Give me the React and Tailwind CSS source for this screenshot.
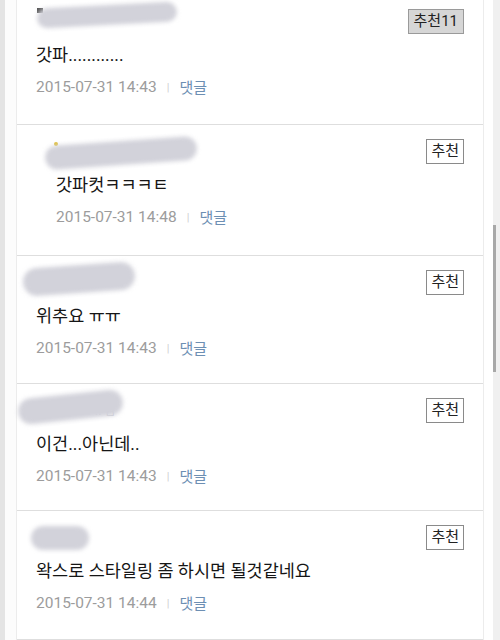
import React from "react";

const KR = { fontFamily: 'Roboto, "Noto Sans CJK KR", sans-serif' };

function Badge({ label, active }) {
  return (
    <div
      className={
        "h-[25px] flex items-center justify-center border text-[15px] leading-none text-[#222] " +
        (active ? "bg-[#d6d6d6] border-[#9a9a9a] px-[5px]" : "bg-white border-[#8a8a8a] px-[4px]")
      }
    >
      {label}
    </div>
  );
}

function Row({ h, indent, badge, active, text, date, blob, extra, first }) {
  return (
    <div
      className={"relative border-b border-[#dedede] " + h + (first ? " -mt-[5px]" : "")}
    >
      <div className={"pt-[14px] pr-[19px] " + (indent ? "pl-[39px]" : "pl-[19px]")}>
        <div className="relative h-[25px] flex justify-end">
          <Badge label={badge} active={active} />
        </div>
        <div className="mt-[9px] h-[24px] flex items-center text-[17.5px] text-[#151515]">
          {text}
        </div>
        <div className="mt-[11px] h-[20px] flex items-center text-[15.5px] text-[#9c9c9c]">
          <span>{date}</span>
          <span className="mx-[10px] text-[11px] text-[#d0d0d0]">|</span>
          <span className="text-[#6d8fb3] text-[15px]">댓글</span>
        </div>
      </div>
      {extra}
      <div className={"absolute rounded-full bg-[#d2d2da] blur-[2px] " + blob} />
    </div>
  );
}

export default function App() {
  return (
    <div className="w-[500px] h-[640px] overflow-hidden flex bg-white" style={KR}>
      <div className="w-[5px] h-full bg-[#e4e4e4]" />
      <div className="w-[11px] h-full bg-[#fcfcfc]" />
      <div className="w-[468px] h-full border-l border-r border-[#ececec] flex flex-col">
        <Row
          first
          h="h-[131px]"
          badge="추천11"
          active
          text="갓파............"
          date="2015-07-31 14:43"
          blob="left-[20px] top-[10px] w-[140px] h-[20px] -rotate-[3deg]"
          extra={<div className="absolute left-[20px] top-[13px] w-[6px] h-[5px] bg-[#555]" />}
        />
        <Row
          h="h-[132px]"
          indent
          badge="추천"
          text="갓파컷ㅋㅋㅋㅌ"
          date="2015-07-31 14:48"
          blob="left-[28px] top-[16px] w-[152px] h-[24px] -rotate-[4deg]"
          extra={<div className="absolute left-[37px] top-[17px] w-[4px] h-[4px] rounded-full bg-[#e0c040]" />}
        />
        <Row
          h="h-[129px]"
          badge="추천"
          text="위추요 ㅠㅠ"
          date="2015-07-31 14:43"
          blob="left-[6px] top-[9px] w-[112px] h-[28px] -rotate-[4deg]"
        />
        <Row
          h="h-[128px]"
          badge="추천"
          text="이건...아닌데.."
          date="2015-07-31 14:43"
          blob="left-[1px] top-[10px] w-[105px] h-[26px] -rotate-[6deg]"
          extra={<div className="absolute left-[78px] top-[18px] text-[12px] text-[#c8c8d0]">.. 님</div>}
        />
        <Row
          h="h-[130px]"
          badge="추천"
          text="왁스로 스타일링 좀 하시면 될것같네요"
          date="2015-07-31 14:44"
          blob="left-[14px] top-[15px] w-[58px] h-[24px]"
        />
      </div>
      <div className="w-[9px] h-full bg-white" />
      <div className="flex-1 h-full bg-[#f0f0f0] flex">
        <div className="w-[3px] h-full flex flex-col">
          <div className="h-[225px]" />
          <div className="h-[147px] bg-[#a8a8a8]" />
        </div>
      </div>
    </div>
  );
}
